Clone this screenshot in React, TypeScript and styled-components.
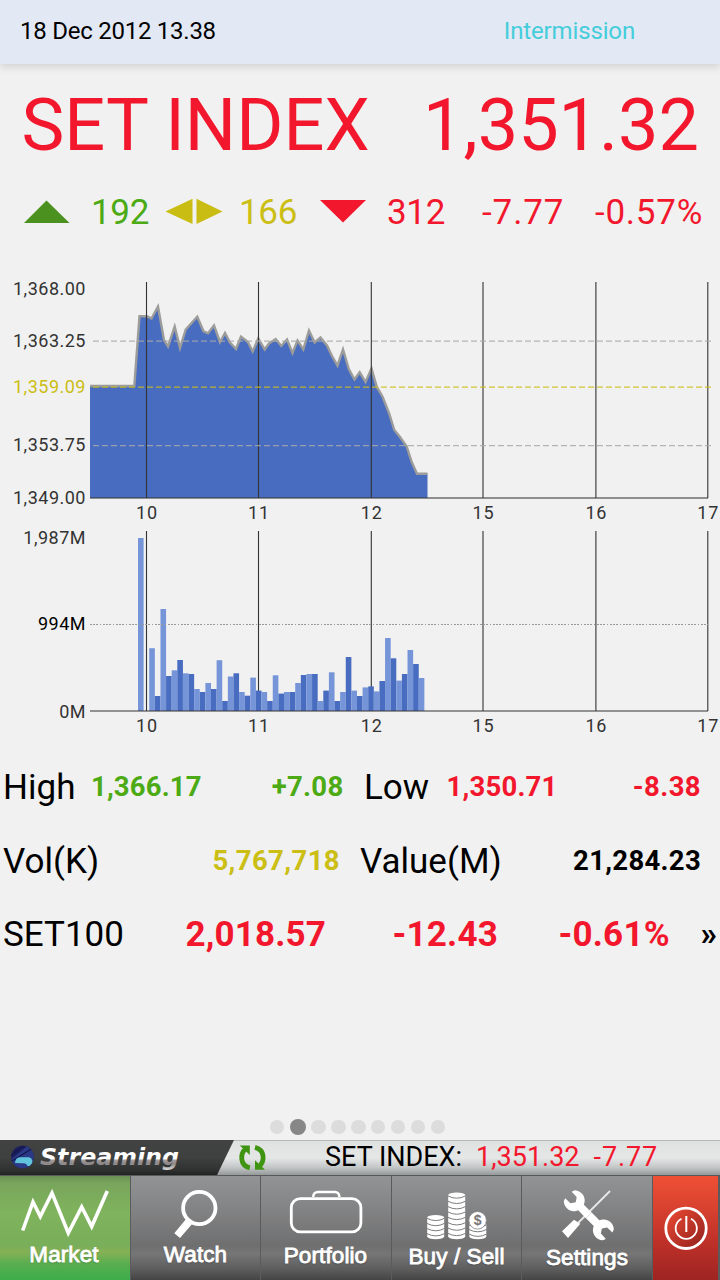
import React from "react";
import styled, { createGlobalStyle } from "styled-components";

const RED = "#f2172c";
const GREEN = "#4caa14";
const YELLOW = "#cbbe14";

const GlobalStyle = createGlobalStyle`
  * { box-sizing: border-box; }
  body { margin: 0; background: #f1f1f1; }
`;

const Screen = styled.div`
  width: 720px;
  height: 1280px;
  overflow: hidden;
  display: flex;
  flex-direction: column;
  background: #f1f1f1;
  font-family: Roboto, sans-serif;
  color: #000;
`;

const Header = styled.header`
  height: 64px;
  flex: none;
  display: flex;
  justify-content: space-between;
  align-items: center;
  padding: 0 85px 3px 20px;
  background: #e2e8f4;
  box-shadow: 0 2px 9px rgba(0, 0, 0, 0.16);
  font-size: 24px;
  letter-spacing: -0.25px;
`;

const Status = styled.span`
  color: #45cddb;
  letter-spacing: -0.15px;
`;

const Title = styled.section`
  height: 113px;
  flex: none;
  display: flex;
  justify-content: space-between;
  align-items: center;
  padding: 10px 21px 0 21.5px;
  font-size: 72px;
  line-height: 84px;
  color: ${RED};
`;

const Counts = styled.section`
  height: 70px;
  flex: none;
  display: grid;
  grid-template-columns: 70px 74px 74px 81px 67px 95px 113px auto;
  padding-left: 21px;
  align-items: center;
  font-size: 36px;
`;

const Figure = styled.span<{ $color?: string; $size?: number; $bold?: boolean; $right?: boolean; $space?: number }>`
  color: ${(p) => p.$color ?? "#000"};
  font-size: ${(p) => p.$size ?? 36}px;
  font-weight: ${(p) => (p.$bold ? 700 : 400)};
  text-align: ${(p) => (p.$right ? "right" : "left")};
  letter-spacing: ${(p) => p.$space ?? 0}px;
  white-space: nowrap;
`;

const StatFigure = styled(Figure)`
  line-height: 40px;
`;

const ArrowIcon = styled.svg`
  display: block;
  overflow: visible;
`;

const Charts = styled.svg`
  display: block;
  flex: none;
  width: 720px;
  height: 493px;
`;

const Stats = styled.section`
  display: flex;
  flex-direction: column;
  flex: 1;
  padding-top: 27px;
`;

const StatRow = styled.div<{ $columns: string }>`
  height: 73.5px;
  display: grid;
  grid-template-columns: ${(p) => p.$columns};
  align-items: start;
  padding-left: 3px;
  line-height: 42px;
`;

const Dots = styled.div`
  height: 27px;
  flex: none;
  display: flex;
  justify-content: center;
  align-items: center;
  gap: 5.5px;
  padding: 1.5px 5px 0 0;
`;

const Dot = styled.i<{ $on: boolean }>`
  width: ${(p) => (p.$on ? 16 : 14.4)}px;
  height: ${(p) => (p.$on ? 16 : 14.4)}px;
  border-radius: 50%;
  background: ${(p) => (p.$on ? "#878787" : "#dcdcdc")};
`;

const Ticker = styled.div`
  height: 36px;
  flex: none;
  display: flex;
  align-items: stretch;
  border-top: 1px solid #b6b8b8;
  border-bottom: 1px solid #58595a;
  background: linear-gradient(#e0e2e2, #e5e7e7 50%, #c3c6c7 78%, #96999a);
`;

const Brand = styled.div`
  width: 234px;
  margin-top: -1px;
  clip-path: polygon(0 0, 100% 0, 217px 100%, 0 100%);
  background: linear-gradient(#424242, #3f4040 50%, #303232 85%, #202121);
`;

const TickerText = styled.div`
  display: flex;
  align-items: center;
  gap: 14px;
  line-height: 32px;
  padding: 0 0 2px 55px;
`;

const Nav = styled.nav`
  height: 104px;
  flex: none;
  display: grid;
  grid-template-columns: 131px 130px 131px 130px 131px 67px;
`;

const tabBackground = {
  active: "linear-gradient(#6b8f55, #78a55c 7%, #7fb35c 35%, #79ae5a 67%, #86b155 73%, #5aae50 84%, #3bad49)",
  plain: "linear-gradient(#929394, #868788 25%, #6f6f70 67%, #767677 75%, #5c5c5d 90%, #444445)",
  power: "linear-gradient(#ef5035, #d8422f 30%, #c13229 60%, #9e2422)",
};

const Tab = styled.div<{ $kind: keyof typeof tabBackground }>`
  display: flex;
  flex-direction: column;
  align-items: center;
  background: ${(p) => tabBackground[p.$kind]};
  border-right: ${(p) => (p.$kind === "power" ? 2 : 1)}px solid #5b5b5d;
`;

const TabLabel = styled.span<{ $drop?: number; $shift?: number }>`
  margin: ${(p) => p.$drop ?? 0}px ${(p) => p.$shift ?? 0}px 0 0;
  color: #fff;
  font-family: "Liberation Sans", Arial, sans-serif;
  font-size: 22.5px;
  line-height: 26px;
  letter-spacing: 0.1px;
  white-space: nowrap;
  -webkit-text-stroke: 0.85px #fff;
  text-shadow: 0 1px 2px rgba(0, 0, 0, 0.3);
`;

const TabIcon = styled.svg`
  display: block;
  flex: none;
  width: 130px;
  height: 66px;
`;

const priceLine: [number, number][] = [
  [90, 386], [134.3, 386], [139.5, 316.3], [147, 316.3], [151.5, 318.5], [158, 306.5], [164, 340], [168, 346.5],
  [174.7, 326.5], [180, 348], [185.7, 329.5], [197.3, 316.8], [203.5, 331.3], [208, 333.3], [214, 325.5], [220, 342],
  [225, 333], [230, 342.5], [236, 349], [241, 336.7], [247.7, 341.7], [252.7, 351.5], [258.3, 338.5], [264.7, 349.5],
  [269, 343.5], [275.7, 339], [281.3, 346], [287, 339.5], [292.5, 353], [297.5, 340.5], [303.3, 349.5], [309, 330.5],
  [314.7, 342.5], [320.5, 337.5], [327, 345.5], [332, 356], [337.5, 365.5], [343, 349.5], [348.8, 369], [354.5, 379.5],
  [359.7, 372.3], [365.5, 382], [371.5, 368.5], [376.7, 386.7], [382.7, 397], [389.3, 414], [394.3, 430], [400, 437],
  [406.7, 446.5], [411.7, 462], [417, 473.7], [427.5, 473.7],
];

const volumes = [
  173, 0, 62.8, 15, 102, 35, 40.7, 51, 37.7, 37, 22, 19, 28, 22, 50.8, 10, 34.5, 37.7, 19, 15.3, 33.4, 20.4, 19, 10,
  35.7, 17.4, 19, 19, 28, 36, 37, 37, 10, 20.4, 38.7, 10, 19, 54, 20.4, 15, 23.6, 24.6, 19.6, 30, 73, 52.7, 30.4, 37,
  61, 47, 33,
];

const hours: [number, string][] = [
  [146.5, "10"], [258.5, "11"], [371.3, "12"], [483, "15"], [595.9, "16"], [707.8, "17"],
];

function AxisLabel({ y, text, color = "#333" }: { y: number; text: string; color?: string }) {
  return (
    <text x={86} y={y} textAnchor="end" fontSize={18} letterSpacing={0.5} fill={color}>
      {text}
    </text>
  );
}

function HourAxis({ top, base, labelY }: { top: number; base: number; labelY: number }) {
  return (
    <g>
      {hours.map(([x, label]) => (
        <g key={label}>
          <line x1={x} x2={x} y1={top} y2={base} stroke="#333" strokeWidth={1.1} />
          <text x={x + 0.4} y={labelY} textAnchor="middle" fontSize={18} letterSpacing={0.8} fill="#333">
            {label}
          </text>
        </g>
      ))}
    </g>
  );
}

function MarketCharts() {
  const line = priceLine.map((p) => p.join(",")).join(" ");
  return (
    <Charts viewBox="0 247 720 493" fontFamily="Roboto, sans-serif">
      <polygon points={`${line} 427.5,498 90,498`} fill="#486cc0" />
      <polyline points={line} fill="none" stroke="#9c9c9a" strokeWidth={2.4} />
      <line x1={90} x2={708} y1={498} y2={498} stroke="#333" strokeOpacity={0.52} strokeWidth={2} />
      <HourAxis top={282} base={498} labelY={519} />
      <line x1={93} x2={711} y1={341.2} y2={341.2} stroke="#a8a8a8" strokeOpacity={0.85} strokeWidth={1.3} strokeDasharray="6 3" />
      <line x1={93} x2={711} y1={387.2} y2={387.2} stroke={YELLOW} strokeOpacity={0.85} strokeWidth={1.3} strokeDasharray="6 3" />
      <line x1={93} x2={711} y1={445.7} y2={445.7} stroke="#a8a8a8" strokeOpacity={0.85} strokeWidth={1.3} strokeDasharray="6 3" />
      <AxisLabel y={295} text="1,368.00" />
      <AxisLabel y={347} text="1,363.25" />
      <AxisLabel y={393} text="1,359.09" color={YELLOW} />
      <AxisLabel y={451.4} text="1,353.75" />
      <AxisLabel y={504.4} text="1,349.00" />

      <HourAxis top={531} base={711} labelY={732} />
      {volumes.map((h, i) => (
        <rect key={i} x={138 + i * 5.615} y={711 - h} width={5.615} height={h} fill={i % 2 ? "#486cc0" : "#7695d9"} />
      ))}
      <line x1={90} x2={708} y1={624.5} y2={624.5} stroke="#999" strokeWidth={1} strokeDasharray="2 1 2 1 2 2 1 2" />
      <line x1={90} x2={708} y1={711} y2={711} stroke="#333" strokeOpacity={0.5} strokeWidth={2} />
      <AxisLabel y={543.8} text="1,987M" />
      <AxisLabel y={630} text="994M" color="#000" />
      <AxisLabel y={718} text="0M" />
    </Charts>
  );
}

function Wordmark() {
  return (
    <svg width={234} height={35} viewBox="0 1140 234 35">
      <defs>
        <linearGradient id="chrome" gradientUnits="userSpaceOnUse" x1="0" y1="1148" x2="0" y2="1170">
          <stop offset="0" stopColor="#fff" />
          <stop offset="0.48" stopColor="#fff" />
          <stop offset="0.56" stopColor="#a39c9c" />
          <stop offset="0.72" stopColor="#8b8585" />
          <stop offset="1" stopColor="#dcdcdc" />
        </linearGradient>
        <clipPath id="globe">
          <circle cx={22.5} cy={1157} r={11.3} />
        </clipPath>
      </defs>
      <g clipPath="url(#globe)">
        <rect x={10} y={1144} width={25} height={26} fill="#1b1f5c" />
        <path d="M10 1160 L30 1144 L36 1150 L36 1170 L10 1170 Z" fill="#2b3a86" />
        <path d="M10 1156 L25 1145 M12 1161 L33 1148" stroke="#151850" strokeWidth={1.4} />
        <path d="M15 1163 Q15.5 1157.5 20 1157.2 H29 Q34 1158.6 32 1166.5 L27.5 1166 Q26.5 1163 23 1163.2 Z" fill="#62c3dc" />
      </g>
      <text
        x={40}
        y={1165.3}
        fontFamily="'DejaVu Sans', sans-serif"
        fontSize={23}
        fontWeight={700}
        fontStyle="italic"
        textLength={139}
        lengthAdjust="spacingAndGlyphs"
        fill="url(#chrome)"
      >
        Streaming
      </text>
    </svg>
  );
}

function RefreshIcon() {
  const half = (
    <g>
      <path d="M239.8 1145.4 H249.8 V1155 Z" fill="#3f9412" />
      <path d="M246 1148.5 C239.5 1154 240 1165.5 249.8 1167.8" fill="none" stroke="#3f9412" strokeWidth={4.8} />
    </g>
  );
  return (
    <svg width={36} height={34} viewBox="234 1141 36 34">
      {half}
      <g transform="rotate(180 252.4 1157.6)">{half}</g>
    </svg>
  );
}

function Coins({ x, base, count, pitch }: { x: number; base: number; count: number; pitch: number }) {
  const top = base - 3 - count * pitch;
  return (
    <g>
      <path
        d={`M${x} ${top + 2} a8.5 2.7 0 0 1 17 0 V${base - 2.5} a8.5 2.7 0 0 1 -17 0 Z`}
        fill="#fff"
      />
      {Array.from({ length: count }, (_, i) => (
        <path
          key={i}
          d={`M${x - 0.5} ${top + 2.6 + i * pitch} q9 4.8 18 0`}
          fill="none"
          stroke="#7d7d7e"
          strokeWidth={1}
        />
      ))}
    </g>
  );
}

const wrenchHead =
  "M0 -4 L11 -4 A10.3 10.3 0 0 1 27.6 -7.8 L28.8 -4.6 L21.5 -4.4 L18.5 0 L21.5 4.4 L28.8 4.6 L27.6 7.8 A10.3 10.3 0 0 1 11 4 L0 4 Z";

export default function App() {
  return (
    <>
      <GlobalStyle />
      <Screen>
        <Header>
          <span>18 Dec 2012 13.38</span>
          <Status>Intermission</Status>
        </Header>
        <Title>
          <span>SET INDEX</span>
          <span>1,351.32</span>
        </Title>
        <Counts>
          <ArrowIcon width={50} height={28} viewBox="21 198 50 28">
            <path d="M24 223 L46.5 200.5 L69.5 223 Z" fill="#4a911f" />
          </ArrowIcon>
          <Figure $color={GREEN} $size={35} $space={-0.3}>192</Figure>
          <ArrowIcon width={60} height={28} viewBox="165 198 60 28">
            <path d="M165.5 211.5 L192.5 198.8 V224 Z M196.5 198.8 L222.5 211.5 L196.5 224 Z" fill="#c9bd13" />
          </ArrowIcon>
          <Figure $color={YELLOW} $size={35} $space={-0.3}>166</Figure>
          <ArrowIcon width={50} height={28} viewBox="320 198 50 28">
            <path d="M320 200 H366 L343 222.5 Z" fill={RED} />
          </ArrowIcon>
          <Figure $color={RED} $size={35} $space={-0.3}>312</Figure>
          <Figure $color={RED} $size={35} $space={0.9}>-7.77</Figure>
          <Figure $color={RED} $size={35} $space={0.75}>-0.57%</Figure>
        </Counts>
        <MarketCharts />
        <Stats>
          <StatRow $columns="88px 113px 139.5px 20.5px 82.5px 114.5px 140px">
            <Figure $size={35}>High</Figure>
            <StatFigure $size={27.5} $bold $color={GREEN} $space={0.15}>1,366.17</StatFigure>
            <StatFigure $size={27.5} $bold $right $color={GREEN} $space={0.3}>+7.08</StatFigure>
            <span />
            <Figure $size={35}>Low</Figure>
            <StatFigure $size={27.5} $bold $color={RED} $space={0.2}>1,350.71</StatFigure>
            <StatFigure $size={27.5} $bold $right $color={RED} $space={0.4}>-8.38</StatFigure>
          </StatRow>
          <StatRow $columns="140px 197px 20px 160px 181px">
            <Figure $size={35}>Vol(K)</Figure>
            <StatFigure $size={27.5} $bold $right $color={YELLOW} $space={0.4}>5,767,718</StatFigure>
            <span />
            <Figure $size={35}>Value(M)</Figure>
            <StatFigure $size={27.5} $bold $right $space={0.3}>21,284.23</StatFigure>
          </StatRow>
          <StatRow $columns="182.5px 207px 166px 142px auto">
            <Figure $size={35}>SET100</Figure>
            <Figure $size={35} $bold $color={RED} $space={0.15}>2,018.57</Figure>
            <Figure $size={35} $bold $color={RED} $space={0.2}>-12.43</Figure>
            <Figure $size={35} $bold $color={RED} $space={0.2}>-0.61%</Figure>
            <StatFigure $size={33} $bold>»</StatFigure>
          </StatRow>
        </Stats>
        <Dots>
          {Array.from({ length: 9 }, (_, i) => (
            <Dot key={i} $on={i === 1} />
          ))}
        </Dots>
        <Ticker>
          <Brand>
            <Wordmark />
          </Brand>
          <RefreshIcon />
          <TickerText>
            <Figure $size={27}>SET INDEX:</Figure>
            <Figure $size={27} $color={RED}>1,351.32</Figure>
            <Figure $size={27} $color={RED} $space={0.9}>-7.77</Figure>
          </TickerText>
        </Ticker>
        <Nav>
          <Tab $kind="active">
            <TabIcon viewBox="0 1176 130 66">
              <polyline
                points="22.7,1230.5 33,1202 40.3,1216.5 52,1193 68.3,1233 81.7,1207 91.7,1226.5 107.3,1191"
                fill="none"
                stroke="#fff"
                strokeWidth={3.6}
              />
            </TabIcon>
            <TabLabel $shift={2}>Market</TabLabel>
          </Tab>
          <Tab $kind="plain">
            <TabIcon viewBox="131 1176 130 66">
              <circle cx={199.3} cy={1208} r={16.2} fill="none" stroke="#fff" strokeWidth={3.8} />
              <path d="M186.5 1218.5 L192.5 1223.5 L180 1238 L174.3 1233.3 Z" fill="#fff" />
            </TabIcon>
            <TabLabel>Watch</TabLabel>
          </Tab>
          <Tab $kind="plain">
            <TabIcon viewBox="261 1176 130 66">
              <rect x={291.3} y={1198.6} width={69.6} height={33.3} rx={9} fill="none" stroke="#fff" strokeWidth={2.8} />
              <path d="M313.3 1197 V1196 Q313.8 1192.2 318 1192 H335 Q338.8 1192.2 339.3 1196 V1197" fill="none" stroke="#fff" strokeWidth={2.4} />
            </TabIcon>
            <TabLabel $drop={1} $shift={1}>Portfolio</TabLabel>
          </Tab>
          <Tab $kind="plain">
            <TabIcon viewBox="392 1176 130 66">
              <Coins x={427.2} base={1239} count={4} pitch={5.1} />
              <Coins x={448.2} base={1239} count={8} pitch={5.35} />
              <Coins x={469.3} base={1239} count={3} pitch={4.6} />
              <circle cx={477.6} cy={1220.3} r={8.8} fill="#fff" stroke="#7d7d7e" strokeWidth={0.8} />
              <text x={477.6} y={1225.4} textAnchor="middle" fontFamily="'Liberation Sans', sans-serif" fontSize={14} fontWeight={700} fill="#757576">
                $
              </text>
            </TabIcon>
            <TabLabel $drop={2}>Buy / Sell</TabLabel>
          </Tab>
          <Tab $kind="plain">
            <TabIcon viewBox="522 1176 130 66">
              <path d="M610 1191 L574 1227" stroke="#e9e9e9" strokeWidth={1.8} />
              <path d="M574 1219.8 L580.3 1223.7 L568 1238 L562 1231.3 Z" fill="#fff" />
              <g transform="translate(588.8 1215.3) rotate(45)" fill="#fff">
                <path d={wrenchHead} />
                <path d={wrenchHead} transform="scale(-1 1)" />
              </g>
            </TabIcon>
            <TabLabel $drop={3}>Settings</TabLabel>
          </Tab>
          <Tab $kind="power">
            <svg width={65} height={104} viewBox="653 1176 65 104">
              <defs>
                <linearGradient id="button" x1="0" y1="0" x2="1" y2="1">
                  <stop offset="0" stopColor="#ee4b33" />
                  <stop offset="1" stopColor="#8f1f1d" />
                </linearGradient>
              </defs>
              <circle cx={686} cy={1228.3} r={20.2} fill="url(#button)" stroke="#fff" strokeWidth={2.8} />
              <path d="M681.5 1218.8 A10.6 10.6 0 1 0 691 1218.8" fill="none" stroke="#fff" strokeWidth={1.8} />
              <path d="M686.3 1216 V1232" stroke="#fff" strokeWidth={2} />
            </svg>
          </Tab>
        </Nav>
      </Screen>
    </>
  );
}
